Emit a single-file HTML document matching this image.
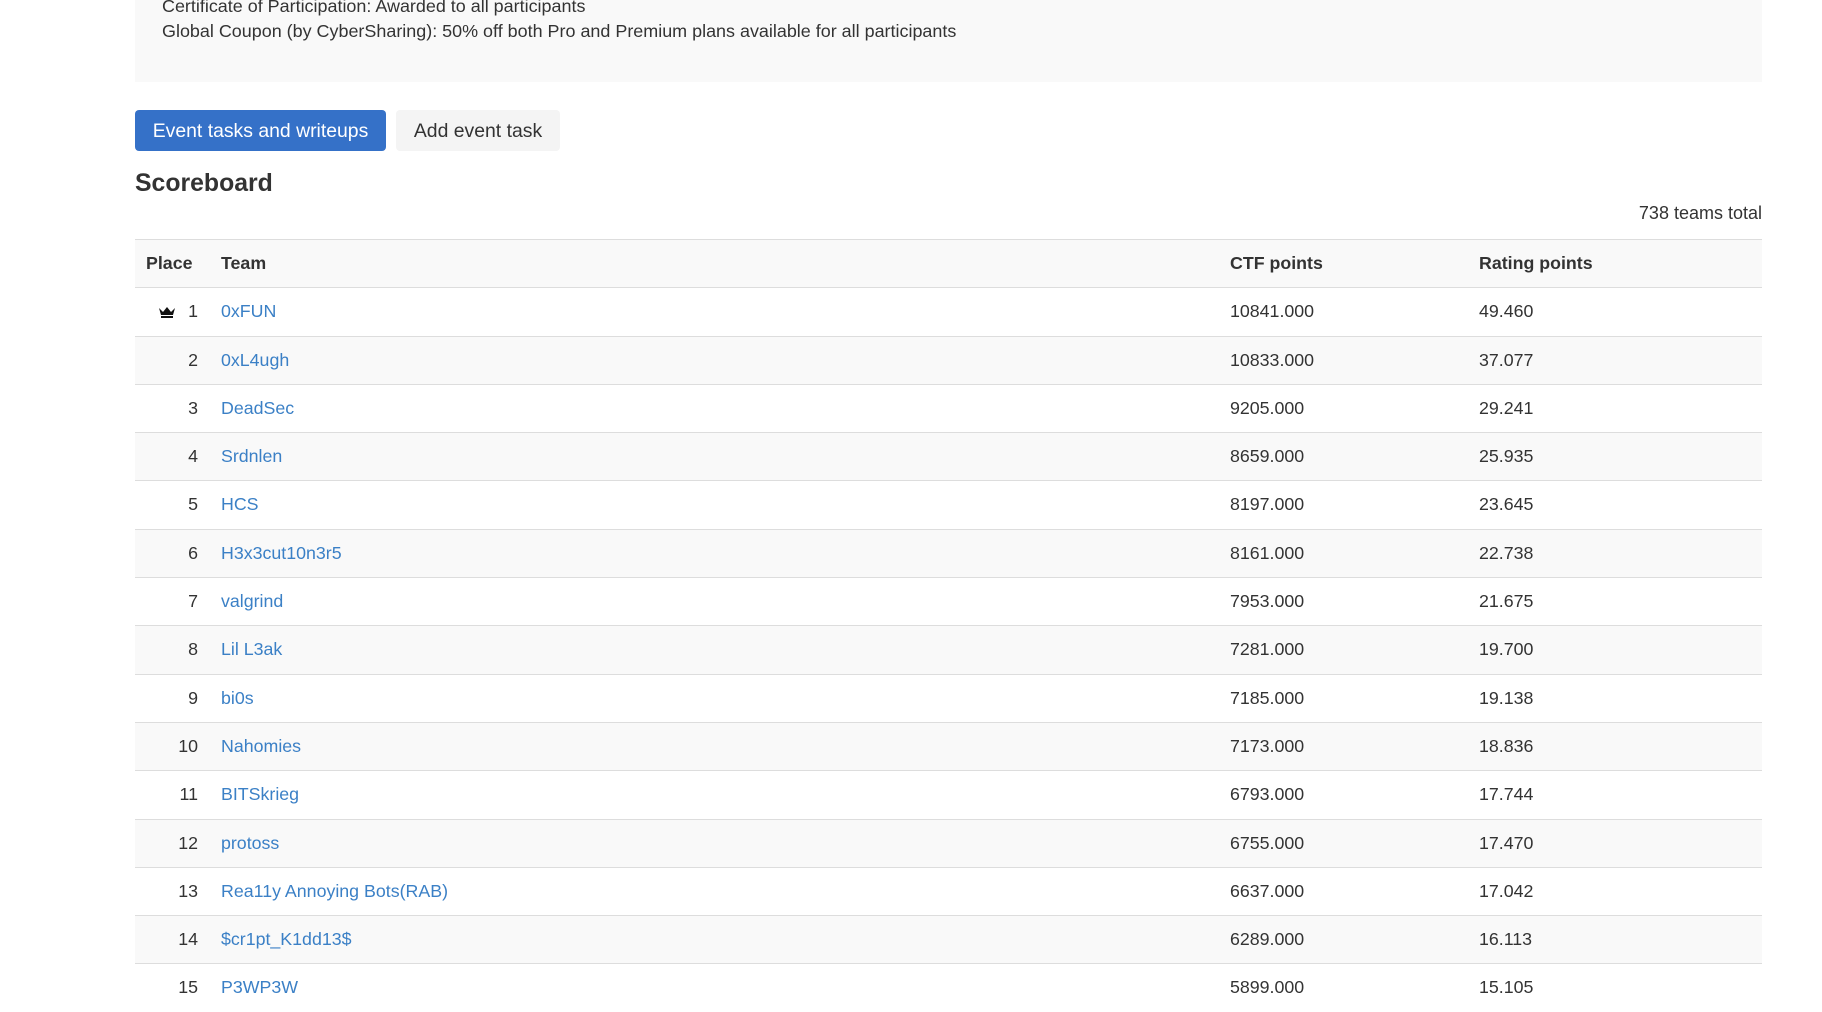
<!DOCTYPE html>
<html><head><meta charset="utf-8"><style>
*{margin:0;padding:0;box-sizing:border-box}
body{width:1822px;height:984px;overflow:hidden;background:#fff;font-family:"Liberation Sans",sans-serif;color:#333;font-size:17.8px;position:relative}
.panel{position:absolute;left:135px;top:-10px;width:1627px;height:92px;background:#f9f9f9}
.panel p{position:absolute;left:27px;font-size:17.95px;color:#333;white-space:nowrap}
.btn{position:absolute;top:110px;height:41px;border-radius:4px;font-size:19.4px;line-height:43px;text-align:center}
.b1{left:135px;width:251px;background:#3571c8;color:#fff}
.b2{left:396px;width:164px;background:#f4f4f4;color:#333}
h2{position:absolute;left:135px;top:170px;font-size:24.8px;font-weight:bold;color:#333}
.total{position:absolute;right:60px;top:203px;font-size:18px}
.tbl{position:absolute;left:135px;top:239px;width:1627px}
.row{position:relative;height:48.3px;border-top:1px solid #ddd;line-height:47px}
.row.g{background:#f9f9f9}
.row span{position:absolute;white-space:nowrap}
.pl{right:1564px;text-align:right}
.tm{left:86px;color:#3b80c6}
.ctf{left:1095px}
.rt{left:1344px}
.hd span{font-weight:bold}
.crown{position:absolute;left:23px;top:18px}
</style></head><body>
<div class="panel">
<p style="top:6px">Certificate of Participation: Awarded to all participants</p>
<p style="top:31px">Global Coupon (by CyberSharing): 50% off both Pro and Premium plans available for all participants</p>
</div>
<div class="btn b1">Event tasks and writeups</div>
<div class="btn b2">Add event task</div>
<h2>Scoreboard</h2>
<div class="total">738 teams total</div>
<div class="tbl">
<div class="row g hd"><span style="left:11px">Place</span><span style="left:86px">Team</span><span class="ctf">CTF points</span><span class="rt">Rating points</span></div>
<div class="row"><svg class="crown" width="18" height="12" viewBox="0 0 18 12"><path d="M1 2 L5 6 L9 1 L13 6 L17 2 L15 9 L3 9 Z" fill="#111"/><rect x="3" y="10" width="12" height="2" fill="#111"/></svg><span class="pl">1</span><span class="tm">0xFUN</span><span class="ctf">10841.000</span><span class="rt">49.460</span></div>
<div class="row g"><span class="pl">2</span><span class="tm">0xL4ugh</span><span class="ctf">10833.000</span><span class="rt">37.077</span></div>
<div class="row"><span class="pl">3</span><span class="tm">DeadSec</span><span class="ctf">9205.000</span><span class="rt">29.241</span></div>
<div class="row g"><span class="pl">4</span><span class="tm">Srdnlen</span><span class="ctf">8659.000</span><span class="rt">25.935</span></div>
<div class="row"><span class="pl">5</span><span class="tm">HCS</span><span class="ctf">8197.000</span><span class="rt">23.645</span></div>
<div class="row g"><span class="pl">6</span><span class="tm">H3x3cut10n3r5</span><span class="ctf">8161.000</span><span class="rt">22.738</span></div>
<div class="row"><span class="pl">7</span><span class="tm">valgrind</span><span class="ctf">7953.000</span><span class="rt">21.675</span></div>
<div class="row g"><span class="pl">8</span><span class="tm">Lil L3ak</span><span class="ctf">7281.000</span><span class="rt">19.700</span></div>
<div class="row"><span class="pl">9</span><span class="tm">bi0s</span><span class="ctf">7185.000</span><span class="rt">19.138</span></div>
<div class="row g"><span class="pl">10</span><span class="tm">Nahomies</span><span class="ctf">7173.000</span><span class="rt">18.836</span></div>
<div class="row"><span class="pl">11</span><span class="tm">BITSkrieg</span><span class="ctf">6793.000</span><span class="rt">17.744</span></div>
<div class="row g"><span class="pl">12</span><span class="tm">protoss</span><span class="ctf">6755.000</span><span class="rt">17.470</span></div>
<div class="row"><span class="pl">13</span><span class="tm">Rea11y Annoying Bots(RAB)</span><span class="ctf">6637.000</span><span class="rt">17.042</span></div>
<div class="row g"><span class="pl">14</span><span class="tm">$cr1pt_K1dd13$</span><span class="ctf">6289.000</span><span class="rt">16.113</span></div>
<div class="row"><span class="pl">15</span><span class="tm">P3WP3W</span><span class="ctf">5899.000</span><span class="rt">15.105</span></div>
</div>
</body></html>
